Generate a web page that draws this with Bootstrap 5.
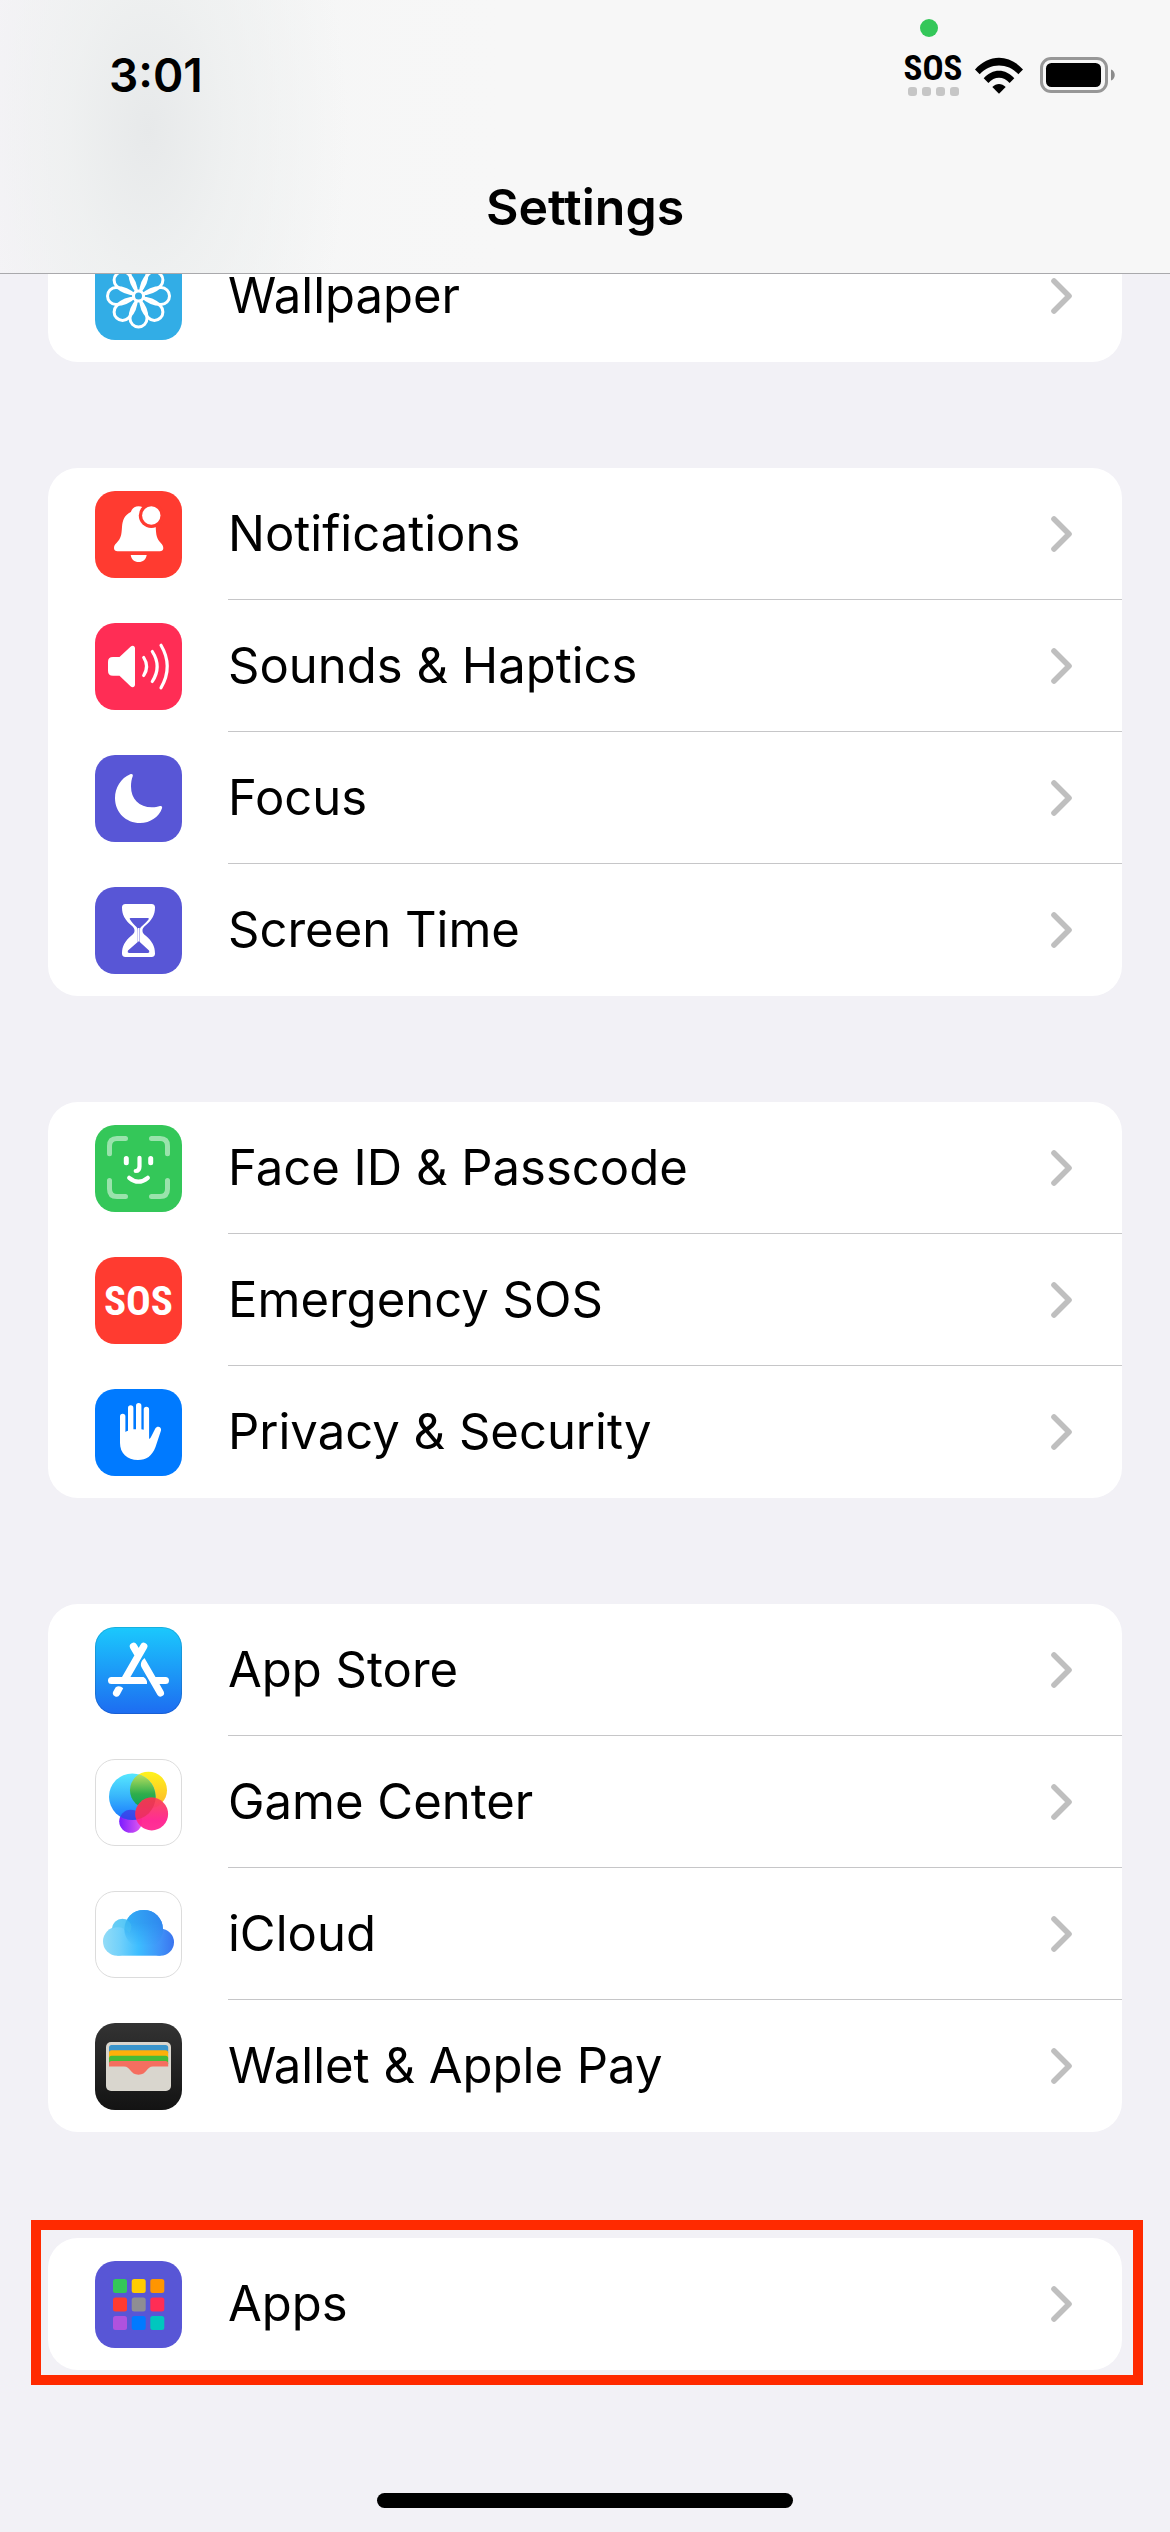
<!DOCTYPE html>
<html lang="en">
<head>
<meta charset="utf-8">
<meta name="viewport" content="width=device-width, initial-scale=1">
<title>Settings</title>
<link rel="stylesheet" href="https://cdn.jsdelivr.net/npm/bootstrap@5.3.0/dist/css/bootstrap.min.css">
<style>
  body { background: #f2f1f6; color: #000; font-family: Inter, "Liberation Sans", sans-serif; }
  .top-bar {
    height: 274px; border-bottom: 1px solid #a9a9ac;
    background:
      radial-gradient(ellipse 200px 380px at 148px 130px, #e7e9ea 0%, rgba(237, 239, 239, .8) 40%, rgba(247, 247, 247, 0) 100%),
      linear-gradient(90deg, #f6f4f8 0, #f5f6f6 120px, #f7f7f7 500px);
  }
  .status-row { height: 150px; padding: 0 54px 0 109px; }
  .clock { font-size: 46px; font-weight: 600; line-height: 1; }
  .sos-signal { width: 56px; }
  .sos-word { font-family: "Liberation Sans Narrow", "Roboto Condensed", "Liberation Sans", sans-serif; font-weight: 700; font-size: 35px; line-height: 28px; }
  .dot-row { gap: 5px; }
  .signal-dot { width: 9px; height: 9px; border-radius: 3px; background: #c6c6c6; }
  .wifi-mark { margin-left: 13px; }
  .mic-dot { top: 19px; right: 232px; width: 18px; height: 18px; background: #34c759; }
  .page-title { font-size: 50px; font-weight: 600; line-height: 60px; padding-top: 27px; }
  .settings-main { padding: 230px 48px 0; }
  .group-gap { display: flex; flex-direction: column; gap: 106px; }
  .tile { background: #fff; border-radius: 30px; overflow: hidden; }
  .tile-row { height: 132px; padding-left: 47px; color: #000; text-decoration: none; }
  .tile-icon { width: 87px; height: 87px; flex: none; }
  .tile-label { margin-left: 46px; padding-right: 50px; font-size: 49px; line-height: 60px; border-bottom: 1px solid #c6c6c8; }
  .tile-row:last-child .tile-label { border-bottom-color: transparent; }
  .chevron { width: 21px; height: 36px; flex: none; }
  .highlight-frame { top: -18px; right: -21px; bottom: -15px; left: -17px; border: 10px solid #ff2a00; pointer-events: none; }
  .home-bar { width: 416px; height: 15px; border-radius: 8px; background: #000; margin-bottom: 24px; }
</style>
<script src="https://cdn.jsdelivr.net/npm/bootstrap@5.3.0/dist/js/bootstrap.bundle.min.js"></script>
</head>
<body>
<svg width="0" height="0" class="position-absolute" aria-hidden="true">
  <defs>
    <symbol id="chev" viewBox="0 0 21 36"><path d="M3 3 18 18 3 33" fill="none" stroke="#bfbfbf" stroke-width="5.6" stroke-linecap="round" stroke-linejoin="round"/></symbol>
    <path id="petal" d="M0-3C-6-9-8.500-16-8.500-22.500A8.500 8.500 0 0 1 8.500-22.500C8.500-16 6-9 0-3Z"/>
    <linearGradient id="gStore" x2="0" y2="1"><stop stop-color="#1bc9fd"/><stop offset="1" stop-color="#1d6cf1"/></linearGradient>
    <linearGradient id="gBlue" x2="0" y2="1"><stop stop-color="#4ce6ff"/><stop offset=".5" stop-color="#2bb0fb"/><stop offset="1" stop-color="#0a6cff"/></linearGradient>
    <linearGradient id="gYellow" x2="0" y2="1"><stop stop-color="#fff31c"/><stop offset="1" stop-color="#fdb32c"/></linearGradient>
    <linearGradient id="gGreen" x2="0" y2="1"><stop offset=".05" stop-color="#bfe060"/><stop offset=".6" stop-color="#2fae4c"/><stop offset="1" stop-color="#0ba05a"/></linearGradient>
    <linearGradient id="gPink" x2="0" y2="1"><stop stop-color="#f94a55"/><stop offset=".7" stop-color="#ff2390"/><stop offset="1" stop-color="#ff2a93"/></linearGradient>
    <linearGradient id="gPurple"><stop stop-color="#7a1cff"/><stop offset="1" stop-color="#e45af0"/></linearGradient>
    <linearGradient id="gCloud" gradientUnits="userSpaceOnUse" x1="8" y1="0" x2="79" y2="0"><stop stop-color="#93dcf7"/><stop offset=".25" stop-color="#6fd0fb"/><stop offset=".5" stop-color="#3dbdff"/><stop offset=".8" stop-color="#4093f8"/><stop offset="1" stop-color="#3a74ef"/></linearGradient>
    <linearGradient id="gDome" x1="0" y1=".4" x2="1" y2=".2"><stop stop-color="#33b1f6"/><stop offset="1" stop-color="#2f86ee"/></linearGradient>
    <linearGradient id="gDomeFade" x2="0" y2="1"><stop offset=".35" stop-color="#fff"/><stop offset=".9" stop-color="#000"/></linearGradient>
    <mask id="domeMask"><rect x="29" y="18" width="40" height="40" fill="url(#gDomeFade)"/></mask>
    <linearGradient id="gWallet" x2="0" y2="1"><stop stop-color="#333"/><stop offset="1" stop-color="#131313"/></linearGradient>
    <clipPath id="blueClip"><circle cx="37.300" cy="37.700" r="23.300"/></clipPath>
  </defs>
</svg>

<div class="min-vh-100 d-flex flex-column">
  <header class="top-bar fixed-top">
    <span class="mic-dot position-absolute rounded-circle"></span>
    <div class="status-row d-flex align-items-center justify-content-between">
      <span class="clock">3:01</span>
      <div class="d-flex align-items-center">
        <div class="sos-signal d-flex flex-column align-items-center">
          <span class="sos-word">SOS</span>
          <span class="dot-row d-flex mt-1"><i class="signal-dot"></i><i class="signal-dot"></i><i class="signal-dot"></i><i class="signal-dot"></i></span>
        </div>
        <svg class="wifi-mark" width="50" height="37" viewBox="0 0 50 37" role="img" aria-label="Wi-Fi">
          <path d="M1 12.500C14.500-3.300 35.500-3.300 49 12.500L44.300 17.200C34 5.500 16 5.500 5.700 17.200Z"/>
          <path d="M9.700 21.300C18.500 11.200 31.500 11.200 40.300 21.300L35.600 26C29.500 19 20.500 19 14.400 26Z"/>
          <path d="M18.300 30C22.300 26 27.700 26 31.700 30L25 36.700Z"/>
        </svg>
        <svg class="ms-3" width="76" height="37" viewBox="0 0 76 37" role="img" aria-label="Battery full">
          <rect x="1.500" y="1.500" width="65" height="33" rx="9.500" fill="none" stroke="#979797" stroke-width="3"/>
          <rect x="6" y="6" width="55" height="24" rx="5.500"/>
          <path d="M71 12.500C76 14 76 22 71 23.500Z" fill="#8c8c8c"/>
        </svg>
      </div>
    </div>
    <h1 class="page-title text-center m-0">Settings</h1>
  </header>

  <main class="settings-main group-gap">
    <nav class="tile" aria-label="Display">
      <a class="tile-row d-flex align-items-center" href="#wallpaper">
        <svg class="tile-icon" viewBox="0 0 87 87"><rect width="87" height="87" rx="20" fill="#32ade6"/>
          <g transform="translate(43.500 43)" fill="none" stroke="#fff" stroke-width="3"><use href="#petal"/><use href="#petal" transform="rotate(45)"/><use href="#petal" transform="rotate(90)"/><use href="#petal" transform="rotate(135)"/><use href="#petal" transform="rotate(180)"/><use href="#petal" transform="rotate(225)"/><use href="#petal" transform="rotate(270)"/><use href="#petal" transform="rotate(315)"/><circle r="5" fill="#32ade6"/></g></svg>
        <span class="tile-label d-flex align-items-center justify-content-between flex-grow-1 h-100">Wallpaper<svg class="chevron"><use href="#chev"/></svg></span>
      </a>
    </nav>

    <nav class="tile" aria-label="Alerts and focus">
      <a class="tile-row d-flex align-items-center" href="#notifications">
        <svg class="tile-icon" viewBox="0 0 87 87"><rect width="87" height="87" rx="20" fill="#ff3b30"/>
          <path fill="#fff" d="M43.500 15.200C39.500 15.200 37 17.500 35.800 21C29.500 24 27.500 29 27 36C26.500 44 26 47.500 21.500 52C19.600 53.800 19 55 19 57.200C19 59 20.500 60.300 22.500 60.300H64.800C66.800 60.300 68.300 59 68.300 57.200C68.300 55 67.500 53.800 65.800 52C61.500 47.500 61.200 44 60.700 36C60 29 58 24 51.500 21C50.500 17.500 47.500 15.200 43.500 15.200ZM35.700 64H51.700C51 68.500 48 71 43.700 71S36.400 68.500 35.700 64Z"/>
          <circle cx="56.300" cy="24.500" r="12.500" fill="#ff3b30"/><circle cx="56.300" cy="24.500" r="9.200" fill="#fff"/></svg>
        <span class="tile-label d-flex align-items-center justify-content-between flex-grow-1 h-100">Notifications<svg class="chevron"><use href="#chev"/></svg></span>
      </a>
      <a class="tile-row d-flex align-items-center" href="#sounds">
        <svg class="tile-icon" viewBox="0 0 87 87"><rect width="87" height="87" rx="20" fill="#ff2d55"/>
          <path fill="#fff" d="M18 34H24.500L35.500 23.700C37.500 22 40 22.700 40 25.500V61.500C40 64.300 37.500 65 35.500 63.300L24.500 52.700H18C14.500 52.700 13 51 13 47.700V39C13 35.700 14.500 34 18 34Z"/>
          <path fill="none" stroke="#fff" stroke-width="3.200" stroke-linecap="round" d="M48.700 34.500Q54.500 43.400 48.700 52.500M57.300 28.500Q67 43.500 57.300 58.500M66 22.300Q78.500 43.400 66 64.800"/></svg>
        <span class="tile-label d-flex align-items-center justify-content-between flex-grow-1 h-100">Sounds &amp; Haptics<svg class="chevron"><use href="#chev"/></svg></span>
      </a>
      <a class="tile-row d-flex align-items-center" href="#focus">
        <svg class="tile-icon" viewBox="0 0 87 87"><rect width="87" height="87" rx="20" fill="#5856d6"/>
          <path fill="#fff" d="M35.200 19.200C37 18.600 38.200 19.300 37.800 21C36.500 24 36 28 36 31.500C36 44 44 52.300 57 52.300C60 52.300 62.500 52 65 51C66.800 50.500 67.500 51.800 67 53.300C64 62 55.500 68 45 68C31 68 20 57.500 20 43C20 32.500 26 23 35.200 19.200Z"/></svg>
        <span class="tile-label d-flex align-items-center justify-content-between flex-grow-1 h-100">Focus<svg class="chevron"><use href="#chev"/></svg></span>
      </a>
      <a class="tile-row d-flex align-items-center" href="#screen-time">
        <svg class="tile-icon" viewBox="0 0 87 87"><rect width="87" height="87" rx="20" fill="#5856d6"/>
          <path fill="#fff" d="M30.500 17H56.500C59 17 60 18.300 60 20.500C60 28 57 33 50.500 38.500C47.700 41 47.500 42 47.500 43.500S47.700 46 50.500 48.500C57 54 60 59 60 66.500C60 68.700 59 70 56.500 70H30.500C28 70 27 68.700 27 66.500C27 59 30 54 36.500 48.500C39.300 46 39.500 45 39.500 43.500S39.300 41 36.500 38.500C30 33 27 28 27 20.500C27 18.300 28 17 30.500 17Z"/>
          <path fill="#5856d6" d="M35.500 31H53Q54.500 31.200 53.500 32.500C51 35.500 48 38 46 40C44.800 41.500 44.800 42 44.800 45V55L54 63.500Q55 66 52.500 66H34.500Q32 66 33 63.500L42.700 55V45C42.700 42 42.700 41.500 41.500 40C39.500 38 37 35.500 35 32.500Q34 31.200 35.500 31Z"/>
          <path stroke="#fff" stroke-width="1.600" d="M43.700 41V54.500"/></svg>
        <span class="tile-label d-flex align-items-center justify-content-between flex-grow-1 h-100">Screen Time<svg class="chevron"><use href="#chev"/></svg></span>
      </a>
    </nav>

    <nav class="tile" aria-label="Security">
      <a class="tile-row d-flex align-items-center" href="#face-id">
        <svg class="tile-icon" viewBox="0 0 87 87"><rect width="87" height="87" rx="20" fill="#34c759"/>
          <g fill="none" stroke="#fff" stroke-linecap="round"><path stroke-opacity=".5" stroke-width="5" d="M14.500 28.700V21Q14.500 13.500 22 13.500H30.500M56.500 13.500H65Q72.500 13.500 72.500 21V28.700M72.500 55.500V64Q72.500 71.500 65 71.500H56.500M30.500 71.500H22Q14.500 71.500 14.500 64V55.500"/>
          <path stroke-width="5" d="M31.300 33.500V37.700M55.700 33.500V37.700"/><path stroke-width="4.200" d="M44.500 32.800V41.500Q44.500 46 40.700 46M34.200 52.800Q43.500 60.500 52.800 52.800"/></g></svg>
        <span class="tile-label d-flex align-items-center justify-content-between flex-grow-1 h-100">Face ID &amp; Passcode<svg class="chevron"><use href="#chev"/></svg></span>
      </a>
      <a class="tile-row d-flex align-items-center" href="#sos">
        <svg class="tile-icon" viewBox="0 0 87 87"><rect width="87" height="87" rx="20" fill="#ff3b30"/>
          <text x="43.500" y="58" text-anchor="middle" fill="#fff" font-family="Liberation Sans Narrow, Roboto Condensed, Liberation Sans, sans-serif" font-weight="700" font-size="41">SOS</text></svg>
        <span class="tile-label d-flex align-items-center justify-content-between flex-grow-1 h-100">Emergency SOS<svg class="chevron"><use href="#chev"/></svg></span>
      </a>
      <a class="tile-row d-flex align-items-center" href="#privacy">
        <svg class="tile-icon" viewBox="0 0 87 87"><rect width="87" height="87" rx="20" fill="#007aff"/>
          <path fill="#fff" d="M25 27.400A2.700 2.700 0 0 1 30.400 27.400V43Q31.500 42.300 33 41.800V19A2.700 2.700 0 0 1 38.400 19V40.200H41V16.700A2.700 2.700 0 0 1 46.400 16.700V40.200Q47.500 40.300 48.700 40.800V20.400A2.700 2.700 0 0 1 54.100 20.400V50Q55.500 49.500 56.500 47L60.300 39.500C62 36.500 66.800 37.500 66 41.500L60.500 58C57 67 51.500 71 43 71C32 71 25 64 25 54Z"/></svg>
        <span class="tile-label d-flex align-items-center justify-content-between flex-grow-1 h-100">Privacy &amp; Security<svg class="chevron"><use href="#chev"/></svg></span>
      </a>
    </nav>

    <nav class="tile" aria-label="Services">
      <a class="tile-row d-flex align-items-center" href="#app-store">
        <svg class="tile-icon" viewBox="0 0 87 87"><rect width="87" height="87" rx="20" fill="url(#gStore)"/><rect x=".5" y=".5" width="86" height="86" rx="19.500" fill="none" stroke="#000" stroke-opacity=".12"/>
          <g fill="#fff"><path d="M16.500 50H48.500C51 51.500 52.500 54 52 57H16.500A3.500 3.500 0 0 1 16.500 50Z"/>
          <path stroke="#fff" stroke-width="7.400" stroke-linecap="round" d="M48.700 19.500 29.500 53M38.500 19.500 43.500 28"/>
          <path d="M49.500 31C46 34 45 37.500 46.800 40.700L62.500 68A3.600 3.600 0 0 0 68.700 64.400L64.500 57H70.500A3.500 3.500 0 0 0 70.500 50H60.500Z"/>
          <path d="M20.700 60.300C23 58.500 26 59 28.200 61.200L24.700 67.800A3.600 3.600 0 0 1 18.400 64.300Z"/></g></svg>
        <span class="tile-label d-flex align-items-center justify-content-between flex-grow-1 h-100">App Store<svg class="chevron"><use href="#chev"/></svg></span>
      </a>
      <a class="tile-row d-flex align-items-center" href="#game-center">
        <svg class="tile-icon" viewBox="0 0 87 87"><rect x=".5" y=".5" width="86" height="86" rx="19.500" fill="#fff" stroke="#dcdcdc"/>
          <circle cx="35.700" cy="62.300" r="11.500" fill="url(#gPurple)"/><circle cx="53.500" cy="31.200" r="18.500" fill="url(#gYellow)"/><circle cx="37.300" cy="37.700" r="23.300" fill="url(#gBlue)" fill-opacity=".94"/>
          <circle cx="53.500" cy="31.200" r="18.500" fill="url(#gGreen)" clip-path="url(#blueClip)"/>
          <g clip-path="url(#blueClip)"><circle cx="35.700" cy="62.300" r="11.500" fill="#4a2de0" fill-opacity=".6"/></g>
          <circle cx="56.700" cy="55" r="16.400" fill="url(#gPink)" fill-opacity=".96"/><circle cx="56.700" cy="55" r="16.400" fill="#e8304c" fill-opacity=".6" clip-path="url(#blueClip)"/></svg>
        <span class="tile-label d-flex align-items-center justify-content-between flex-grow-1 h-100">Game Center<svg class="chevron"><use href="#chev"/></svg></span>
      </a>
      <a class="tile-row d-flex align-items-center" href="#icloud">
        <svg class="tile-icon" viewBox="0 0 87 87"><rect x=".5" y=".5" width="86" height="86" rx="19.500" fill="#fff" stroke="#dcdcdc"/>
          <g fill="url(#gCloud)"><circle cx="22.300" cy="50.400" r="14.300"/><circle cx="27.500" cy="38.200" r="10.500"/><circle cx="48.700" cy="38.200" r="19.300"/><circle cx="65.500" cy="51.200" r="13.500"/><rect x="22.300" y="40" width="43.200" height="24.700"/></g>
          <circle cx="48.700" cy="38.200" r="19.300" fill="url(#gDome)" mask="url(#domeMask)"/>
          <path d="M17 37.500Q27 33.500 34.500 42C38 36 36.500 31.500 31.500 28.700A10.500 10.500 0 0 0 17 37.500Z" fill="#4cc3f0" fill-opacity=".45"/></svg>
        <span class="tile-label d-flex align-items-center justify-content-between flex-grow-1 h-100">iCloud<svg class="chevron"><use href="#chev"/></svg></span>
      </a>
      <a class="tile-row d-flex align-items-center" href="#wallet">
        <svg class="tile-icon" viewBox="0 0 87 87"><rect width="87" height="87" rx="20" fill="url(#gWallet)"/>
          <rect x="11" y="19" width="65" height="49" rx="5" fill="#d9d6ce"/>
          <path fill="#3a95cc" d="M14 30V24.500Q14 22 16.500 22H70.500Q73.200 22 73.200 24.500V30Z"/>
          <path fill="#feb009" d="M14 35V29.700Q14 27.200 16.500 27.200H70.500Q73.200 27.200 73.200 29.700V35Z"/>
          <path fill="#48bb37" d="M14 41V35.200Q14 32.700 16.500 32.700H70.500Q73.200 32.700 73.200 35.200V41Z"/>
          <path fill="#f56e60" d="M14 43.500V40.500Q14 38 16.500 38H70.500Q73.200 38 73.200 40.500V43.500H58C51.500 43.500 52 51.700 43.500 51.700S35.500 43.500 29 43.500Z"/></svg>
        <span class="tile-label d-flex align-items-center justify-content-between flex-grow-1 h-100">Wallet &amp; Apple Pay<svg class="chevron"><use href="#chev"/></svg></span>
      </a>
    </nav>

    <div class="position-relative">
      <nav class="tile" aria-label="Apps">
        <a class="tile-row d-flex align-items-center" href="#apps">
          <svg class="tile-icon" viewBox="0 0 87 87"><rect width="87" height="87" rx="20" fill="#5856d6"/>
            <rect x="18" y="18" width="14" height="14" rx="2.500" fill="#34c759"/><rect x="36.700" y="18" width="14" height="14" rx="2.500" fill="#fc0"/><rect x="55.300" y="18" width="14" height="14" rx="2.500" fill="#ff9500"/>
            <rect x="18" y="36.500" width="14" height="14" rx="2.500" fill="#ff3b30"/><rect x="36.700" y="36.500" width="14" height="14" rx="2.500" fill="#8e8e93"/><rect x="55.300" y="36.500" width="14" height="14" rx="2.500" fill="#ff2d55"/>
            <rect x="18" y="55" width="14" height="14" rx="2.500" fill="#af52de"/><rect x="36.700" y="55" width="14" height="14" rx="2.500" fill="#007aff"/><rect x="55.300" y="55" width="14" height="14" rx="2.500" fill="#00c7be"/></svg>
          <span class="tile-label d-flex align-items-center justify-content-between flex-grow-1 h-100">Apps<svg class="chevron"><use href="#chev"/></svg></span>
        </a>
      </nav>
      <div class="highlight-frame position-absolute"></div>
    </div>
  </main>

  <div class="home-bar mx-auto mt-auto"></div>
</div>
</body>
</html>
